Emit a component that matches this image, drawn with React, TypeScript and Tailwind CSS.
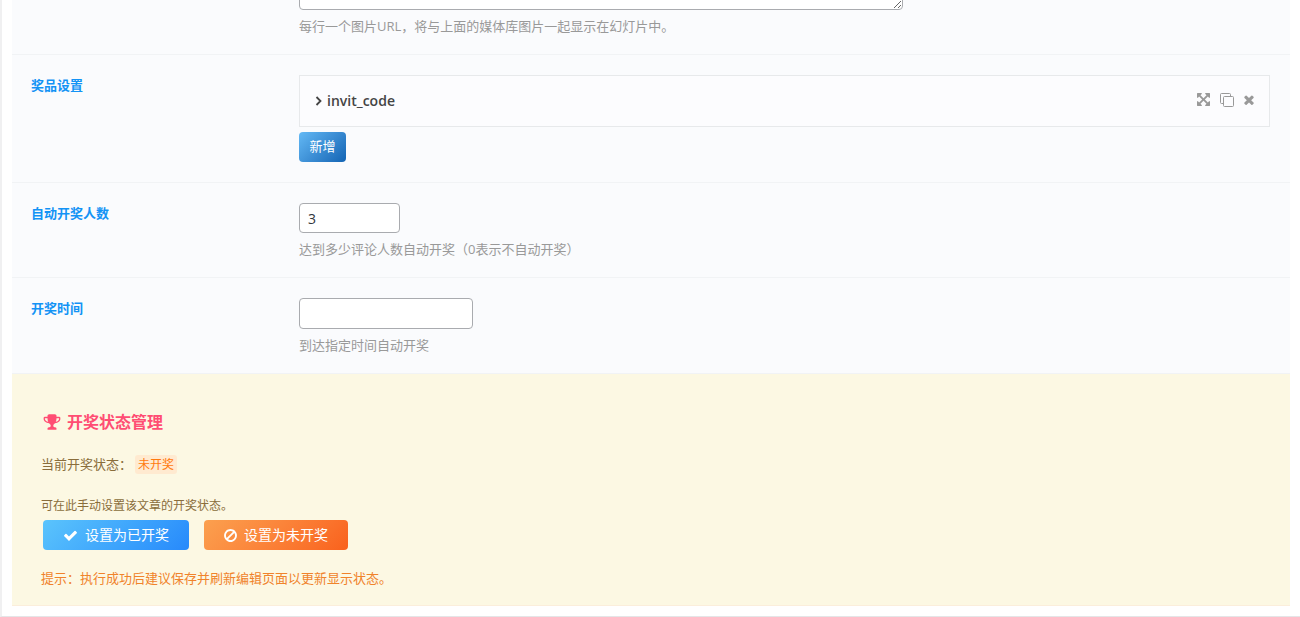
import React from 'react';

const icons = {
  check: {
    viewBox: '0 0 1792 1792',
    d: 'M1671 566q0 40-28 68l-724 724-136 136q-28 28-68 28t-68-28l-136-136-362-362q-28-28-28-68t28-68l136-136q28-28 68-28t68 28l294 295 656-657q28-28 68-28t68 28l136 136q28 28 28 68z',
  },
  ban: {
    viewBox: '128 0 1536 1792',
    d: 'M1440 893q0-161-87-295l-754 753q137 89 297 89 111 0 211.5-43.5t173.5-116.5 116-174.5 43-212.5zm-999 299l755-754q-135-91-300-91-148 0-273 73t-198 199-73 274q0 162 89 299zm1223-299q0 157-61 300t-163.5 246-245 164-298.5 61-298.5-61-245-164-163.5-246-61-300 61-299.5 163.5-245.5 245-164 298.5-61 298.5 61 245 164 163.5 245.5 61 299.5z',
  },
  trophy: {
    viewBox: '0 0 1792 1792',
    d: 'M522 883q-74-162-74-371h-256v96q0 78 94.5 162t235.5 113zm1078-275v-96h-256q0 209-74 371 141-29 235.5-113t94.5-162zm128-128v128q0 71-41.5 143t-112 130-173 97.5-215.5 44.5q-42 54-95 95-38 34-52.5 72.5t-14.5 89.5q0 54 30.5 91t97.5 37q75 0 133.5 45.5t58.5 114.5v64q0 14-9 23t-23 9h-832q-14 0-23-9t-9-23v-64q0-69 58.5-114.5t133.5-45.5q67 0 97.5-37t30.5-91q0-51-14.5-89.5t-52.5-72.5q-53-41-95-95-113-5-215.5-44.5t-173-97.5-112-130-41.5-143v-128q0-40 28-68t68-28h288v-96q0-66 47-113t113-47h576q66 0 113 47t47 113v96h288q40 0 68 28t28 68z',
  },
  move: {
    viewBox: '128 128 1536 1536',
    d: 'M1411 541l-355 355 355 355 144-144q29-31 70-14 39 17 39 59v448q0 26-19 45t-45 19h-448q-42 0-59-40-17-39 14-69l144-144-355-355-355 355 144 144q31 30 14 69-17 40-59 40h-448q-26 0-45-19t-19-45v-448q0-42 40-59 39-17 69 14l144 144 355-355-355-355-144 144q-19 19-45 19-12 0-24-5-40-17-40-59v-448q0-26 19-45t45-19h448q42 0 59 40 17 39-14 69l-144 144 355 355 355-355-144-144q-31-30-14-69 17-40 59-40h448q26 0 45 19t19 45v448q0 42-39 59-13 5-25 5-26 0-45-19z',
  },
  times: {
    viewBox: '302 302 1188 1252',
    d: 'M1490 1322q0 40-28 68l-136 136q-28 28-68 28t-68-28l-294-294-294 294q-28 28-68 28t-68-28l-136-136q-28-28-28-68t28-68l294-294-294-294q-28-28-28-68t28-68l136-136q28-28 68-28t68 28l294 294 294-294q28-28 68-28t68 28l136 136q28 28 28 68t-28 68l-294 294 294 294q28 28 28 68z',
  },
};

const Icon = ({ name, className }: { name: keyof typeof icons; className: string }) => (
  <svg viewBox={icons[name].viewBox} fill="currentColor" aria-hidden="true" className={className}>
    <path d={icons[name].d} />
  </svg>
);

type FieldProps = {
  title?: string;
  htmlFor?: string;
  description?: string;
  children: React.ReactNode;
};

const Field = ({ title, htmlFor, description, children }: FieldProps) => (
  <div className="flex border-b border-[#f1f3f5] py-5 pr-5 pl-[19px]">
    <div className="w-[268px] shrink-0 text-[13px] leading-5 font-bold text-[#1393f5]">
      {title && <label htmlFor={htmlFor}>{title}</label>}
    </div>
    <div className="min-w-0 flex-1">
      {children}
      {description && <p className="mt-2 text-[13px] leading-4 text-[#999999]">{description}</p>}
    </div>
  </div>
);

const App = () => (
  <div className="overflow-hidden bg-white font-['Open_Sans','Noto_Sans_CJK_SC',sans-serif]">
    <div className="border-b border-l-2 border-b-[#e4e5e7] border-l-[#f0f0f1] pr-2.5 pb-2.5 pl-2.5">
      <div className="bg-[#fafbfd]">
        <Field description="每行一个图片URL，将与上面的媒体库图片一起显示在幻灯片中。">
          <textarea
            aria-label="图片URL"
            className="-mt-[135px] block h-[125px] w-[604px] max-w-full rounded border border-[#a9abaf] bg-white"
          />
        </Field>

        <Field title="奖品设置" htmlFor="prize-item">
          <div className="flex h-[52px] items-center justify-between border border-[#e7e9eb] bg-[#fcfcfe] px-3.5 pb-px">
            <button
              id="prize-item"
              type="button"
              className="flex items-center gap-[3px] text-sm font-semibold text-[#444444]"
            >
              <svg viewBox="0 0 10 12" fill="none" stroke="currentColor" strokeWidth="1.8" className="h-3 w-2.5">
                <path d="M2.5 2 6.5 6 2.5 10" />
              </svg>
              invit_code
            </button>
            <div className="flex items-center gap-2.5 pr-px pb-0.5 text-[#999999]">
              <button type="button" aria-label="移动">
                <Icon name="move" className="size-[13px]" />
              </button>
              <button type="button" aria-label="复制">
                <svg viewBox="0 0 14 14" fill="none" stroke="currentColor" className="size-3.5">
                  <path d="M3 10.5H1.5a1 1 0 0 1-1-1v-8a1 1 0 0 1 1-1h8a1 1 0 0 1 1 1V3" />
                  <rect x="3.5" y="3.5" width="10" height="10" rx="1" />
                </svg>
              </button>
              <button type="button" aria-label="删除">
                <Icon name="times" className="size-2.5" />
              </button>
            </div>
          </div>
          <button
            type="button"
            className="mt-[5px] block h-[30px] w-[47px] rounded bg-linear-135 from-[#63b9f5] to-[#1164b4] text-[13px] text-white"
          >
            新增
          </button>
        </Field>

        <Field title="自动开奖人数" htmlFor="auto-count" description="达到多少评论人数自动开奖（0表示不自动开奖）">
          <input
            id="auto-count"
            type="text"
            defaultValue="3"
            className="block h-[30px] w-[101px] rounded border border-[#a9abaf] bg-white px-2 text-sm text-[#32373c]"
          />
        </Field>

        <Field title="开奖时间" htmlFor="draw-time" description="到达指定时间自动开奖">
          <input
            id="draw-time"
            type="text"
            className="block h-[31px] w-[174px] rounded border border-[#a9abaf] bg-white px-2 text-sm text-[#32373c]"
          />
        </Field>
      </div>

      {/* Draw status */}
      <div className="border-b border-[#fbeedb] bg-[#fcf8e3] px-[29px] pt-[38px] pb-[17px] text-[#8a6d3b]">
        <h3 className="flex items-center gap-1.5 pl-0.5 text-base leading-5 font-bold text-[#ff4d73]">
          <Icon name="trophy" className="size-[18px]" />
          开奖状态管理
        </h3>
        <p className="mt-[22px] flex items-center text-[13px] leading-5">
          当前开奖状态：
          <span className="ml-[3px] rounded-[3px] bg-[#ffead0] px-[3px] text-xs leading-[19px] text-[#ff7a0e]">
            未开奖
          </span>
        </p>
        <p className="mt-[22px] text-xs leading-5">可在此手动设置该文章的开奖状态。</p>
        <div className="mt-1 flex gap-[15px] pl-0.5">
          <button
            type="button"
            className="flex h-[30px] items-center gap-[7px] rounded bg-linear-135 from-[#5bc4fc] to-[#2789fb] px-5 text-sm text-white"
          >
            <Icon name="check" className="size-[15px]" />
            设置为已开奖
          </button>
          <button
            type="button"
            className="flex h-[30px] items-center gap-[7px] rounded bg-linear-135 from-[#fba04f] to-[#f9611c] px-5 text-sm text-white"
          >
            <Icon name="ban" className="h-[15px] w-[13px]" />
            设置为未开奖
          </button>
        </div>
        <p className="mt-[18px] text-[13px] leading-5 text-[#f0832b]">
          提示：执行成功后建议保存并刷新编辑页面以更新显示状态。
        </p>
      </div>
    </div>
  </div>
);

export default App;
